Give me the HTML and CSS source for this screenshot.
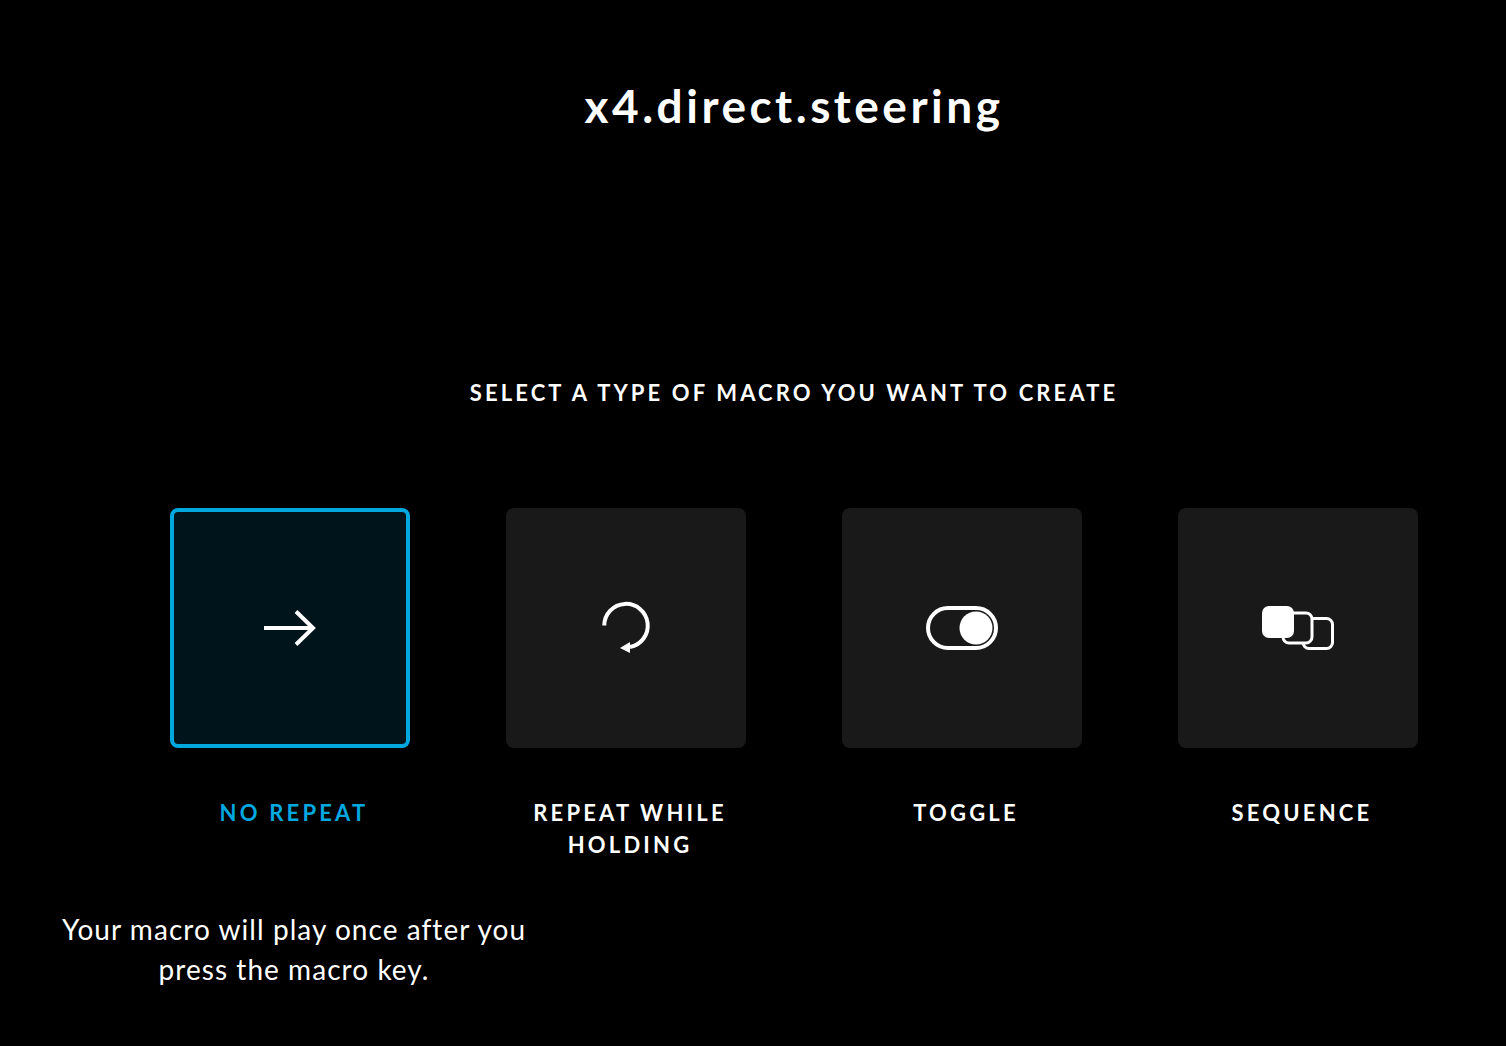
FILE: index.html
```html
<!DOCTYPE html>
<html lang="en">
<head>
    <meta charset="UTF-8">
    <title>Macro type</title>
    <link rel="stylesheet" href="styles.css">
</head>
<body>
<div class="main">
    <h1 class="title">x4.direct.steering</h1>
    <p class="prompt">SELECT A TYPE OF MACRO YOU WANT TO CREATE</p>
</div>
<div class="types">
    <div class="type type-active">
        <div class="tile">
            <svg width="52" height="36" viewBox="0 0 52 36" fill="none" stroke="#fff" stroke-width="4">
                <path d="M0 18H49"/>
                <path d="M32 1.500L49 18L32 34.500"/>
            </svg>
        </div>
        <div class="label">NO REPEAT</div>
        <p class="desc">Your macro will play once after you press the macro key.</p>
    </div>
    <div class="type">
        <div class="tile">
            <svg class="icon-repeat" width="52" height="56" viewBox="0 0 52 56" fill="none" stroke="#fff" stroke-width="4">
                <path d="M2.250 25.500A21.750 21.750 0 1 1 28 47"/>
                <path d="M28 42V53L18 48Z" fill="#fff" stroke="none"/>
            </svg>
        </div>
        <div class="label">REPEAT WHILE HOLDING</div>
    </div>
    <div class="type">
        <div class="tile">
            <svg width="72" height="44" viewBox="0 0 72 44" fill="none">
                <rect x="2" y="2" width="68" height="40" rx="20" stroke="#fff" stroke-width="4"/>
                <circle cx="50" cy="22" r="16.500" fill="#fff"/>
            </svg>
        </div>
        <div class="label">TOGGLE</div>
    </div>
    <div class="type">
        <div class="tile">
            <svg width="72" height="44" viewBox="0 0 72 44" fill="none" stroke="#fff" stroke-width="3">
                <rect x="41" y="12.500" width="29.500" height="30" rx="6"/>
                <rect x="21" y="7" width="29" height="30" rx="6" fill="#191919"/>
                <rect x="0" y="0" width="32" height="32" rx="7" fill="#fff" stroke="none"/>
            </svg>
        </div>
        <div class="label">SEQUENCE</div>
    </div>
</div>
</body>
</html>
```

FILE: styles.css
```css
* {
    box-sizing: border-box;
}
body {
    margin: 0;
    height: 1046px;
    overflow: hidden;
    background: #000;
    color: #fff;
    font-family: "Lato", "Noto Sans", sans-serif;
}
.main {
    padding-left: 82px;
    text-align: center;
}
.title {
    margin: 0;
    padding-top: 76px;
    font-size: 46px;
    line-height: 60px;
    font-weight: 700;
    letter-spacing: 3.500px;
}
.prompt {
    margin: 0;
    padding-top: 241px;
    font-size: 22px;
    line-height: 32px;
    font-weight: 700;
    letter-spacing: 3.120px;
}
.types {
    display: grid;
    grid-template-columns: repeat(4, 248px);
    column-gap: 88px;
    padding: 99px 0 0 170px;
}
.tile {
    display: flex;
    align-items: center;
    justify-content: center;
    width: 240px;
    height: 240px;
    background: #191919;
    border-radius: 8px;
}
.icon-repeat {
    margin-left: 4px;
}
.type-active .tile {
    background: #00141b;
    border: 4px solid #00a8e0;
}
.type-active .label {
    color: #00a8e0;
}
.label {
    margin-top: 49px;
    font-size: 22px;
    line-height: 32px;
    font-weight: 700;
    letter-spacing: 3.200px;
    text-align: center;
}
.desc {
    width: 480px;
    margin: 0 0 0 -116px;
    padding-top: 80px;
    font-size: 28px;
    line-height: 40px;
    letter-spacing: 1.050px;
    text-align: center;
}
```
